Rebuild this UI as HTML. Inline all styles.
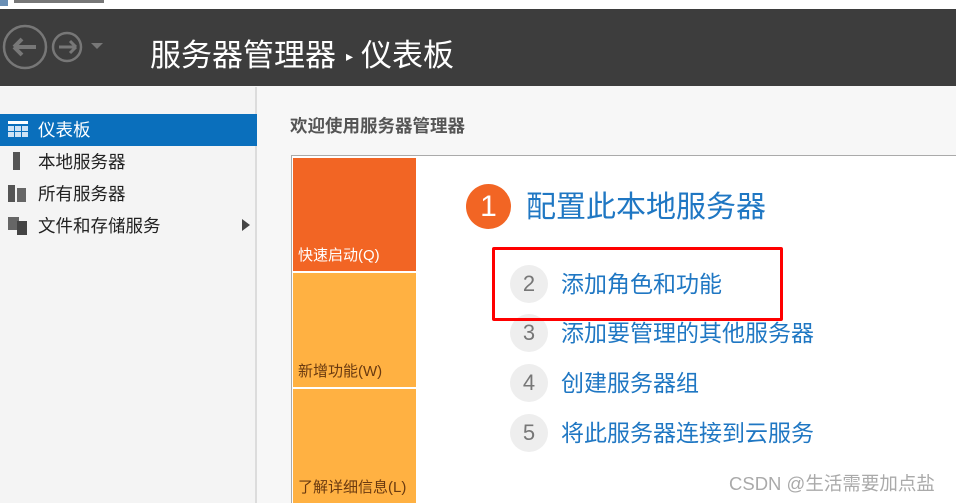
<!DOCTYPE html>
<html><head><meta charset="utf-8"><style>
*{margin:0;padding:0;box-sizing:border-box}
html,body{width:956px;height:503px;overflow:hidden}
body{background:#f7f7f7;font-family:"Liberation Sans","Noto Sans CJK SC",sans-serif;position:relative}
.abs{position:absolute}
#top{left:0;top:0;width:956px;height:9px;background:#fff}
#hdr{left:0;top:9px;width:956px;height:77px;background:#3d3d3d}
#title{left:150px;top:26px;color:#fff;font-size:31px;line-height:42px;white-space:nowrap}
#side{left:0;top:87px;width:257px;height:416px;background:#f4f4f4;border-right:2px solid #dcdcdc}
.it{position:absolute;left:0;width:257px;height:32px;font-size:17.5px;line-height:32px;color:#222;padding-left:38px}
.sel{background:#0a6fbc;color:#fff}
.circ{position:absolute;border-radius:50%;text-align:center;font-family:"Liberation Sans",sans-serif}
.li{position:absolute;left:561px;font-size:23px;color:#1f77c3;line-height:30px;white-space:nowrap}
.n{width:38px;height:38px;left:510px;background:#eeeeee;color:#777;font-size:22px;line-height:38px}
.tile{position:absolute;left:293px;width:123px;font-size:15px;padding:0 0 6px 5px;display:flex;align-items:flex-end}
</style></head><body>
<div class="abs" id="top"><div class="abs" style="left:0;top:0;width:8px;height:6px;background:#6a8fb5"></div><div class="abs" style="left:14px;top:0;width:90px;height:3px;background:#777"></div></div>
<div class="abs" id="hdr">
<svg class="abs" style="left:0;top:14px" width="110" height="50">
<circle cx="25" cy="24" r="21" fill="none" stroke="#777" stroke-width="2.5"/>
<path d="M14 24h22M14 24l8-8M14 24l8 8" stroke="#777" stroke-width="4" fill="none"/>
<circle cx="67" cy="24" r="14" fill="none" stroke="#777" stroke-width="2.5"/>
<path d="M76 24h-17M76 24l-6-6M76 24l-6 6" stroke="#777" stroke-width="3" fill="none"/>
<path d="M91 20h12l-6 6z" fill="#777"/>
</svg>
<div class="abs" id="title">服务器管理器<span style="font-size:14px;vertical-align:5px;margin:0 8px 0 10px">&#9656;</span>仪表板</div>
</div>
<div class="abs" id="side">
<div class="it sel" style="top:27px">仪表板</div>
<div class="it" style="top:59px">本地服务器</div>
<div class="it" style="top:91px">所有服务器</div>
<div class="it" style="top:123px">文件和存储服务</div>
<svg class="abs" style="left:6px;top:32px" width="24" height="130">
<rect x="2" y="2" width="20" height="3" fill="#fff"/><rect x="2" y="7" width="6" height="5" fill="#cfe3f5"/><rect x="9" y="7" width="6" height="5" fill="#cfe3f5"/><rect x="16" y="7" width="6" height="5" fill="#cfe3f5"/><rect x="2" y="13" width="6" height="5" fill="#cfe3f5"/><rect x="9" y="13" width="6" height="5" fill="#cfe3f5"/><rect x="16" y="13" width="6" height="5" fill="#cfe3f5"/>
<rect x="7" y="33" width="7" height="18" fill="#555"/>
<rect x="2" y="66" width="7" height="17" fill="#555"/><rect x="11" y="69" width="9" height="14" fill="#666"/>
<rect x="2" y="98" width="11" height="13" fill="#666"/><rect x="11" y="102" width="10" height="14" fill="#444"/>
</svg>
<div class="abs" style="left:242px;top:132px;width:0;height:0;border-top:6px solid transparent;border-bottom:6px solid transparent;border-left:8px solid #444"></div>
</div>
<div class="abs" style="left:290px;top:113px;font-size:17.5px;font-weight:bold;color:#555">欢迎使用服务器管理器</div>
<div class="abs" style="left:291px;top:155px;width:670px;height:348px;border:1px solid #aaa;border-bottom:none;background:#fff"></div>
<div class="tile" style="top:158px;height:113px;background:#f26524;color:#fff">快速启动(Q)</div>
<div class="tile" style="top:273px;height:114px;background:#ffb142;color:#6a3a10">新增功能(W)</div>
<div class="tile" style="top:389px;height:114px;background:#ffb142;color:#6a3a10">了解详细信息(L)</div>
<div class="circ" style="left:466px;top:184px;width:45px;height:45px;background:#f26524;color:#fff;font-size:30px;line-height:45px">1</div>
<div class="abs" style="left:526px;top:188px;font-size:30px;color:#1f77c3;line-height:40px;white-space:nowrap">配置此本地服务器</div>
<div class="circ n" style="top:265px">2</div><div class="li" style="top:269px">添加角色和功能</div>
<div class="circ n" style="top:314px">3</div><div class="li" style="top:318px">添加要管理的其他服务器</div>
<div class="circ n" style="top:364px">4</div><div class="li" style="top:368px">创建服务器组</div>
<div class="circ n" style="top:414px">5</div><div class="li" style="top:418px">将此服务器连接到云服务</div>
<div class="abs" style="left:492px;top:247px;width:291px;height:74px;border:3px solid #f00;border-radius:2px"></div>
<div class="abs" style="left:729px;top:470px;font-size:18.5px;color:#aaa;white-space:nowrap">CSDN @生活需要加点盐</div>
</body></html>
